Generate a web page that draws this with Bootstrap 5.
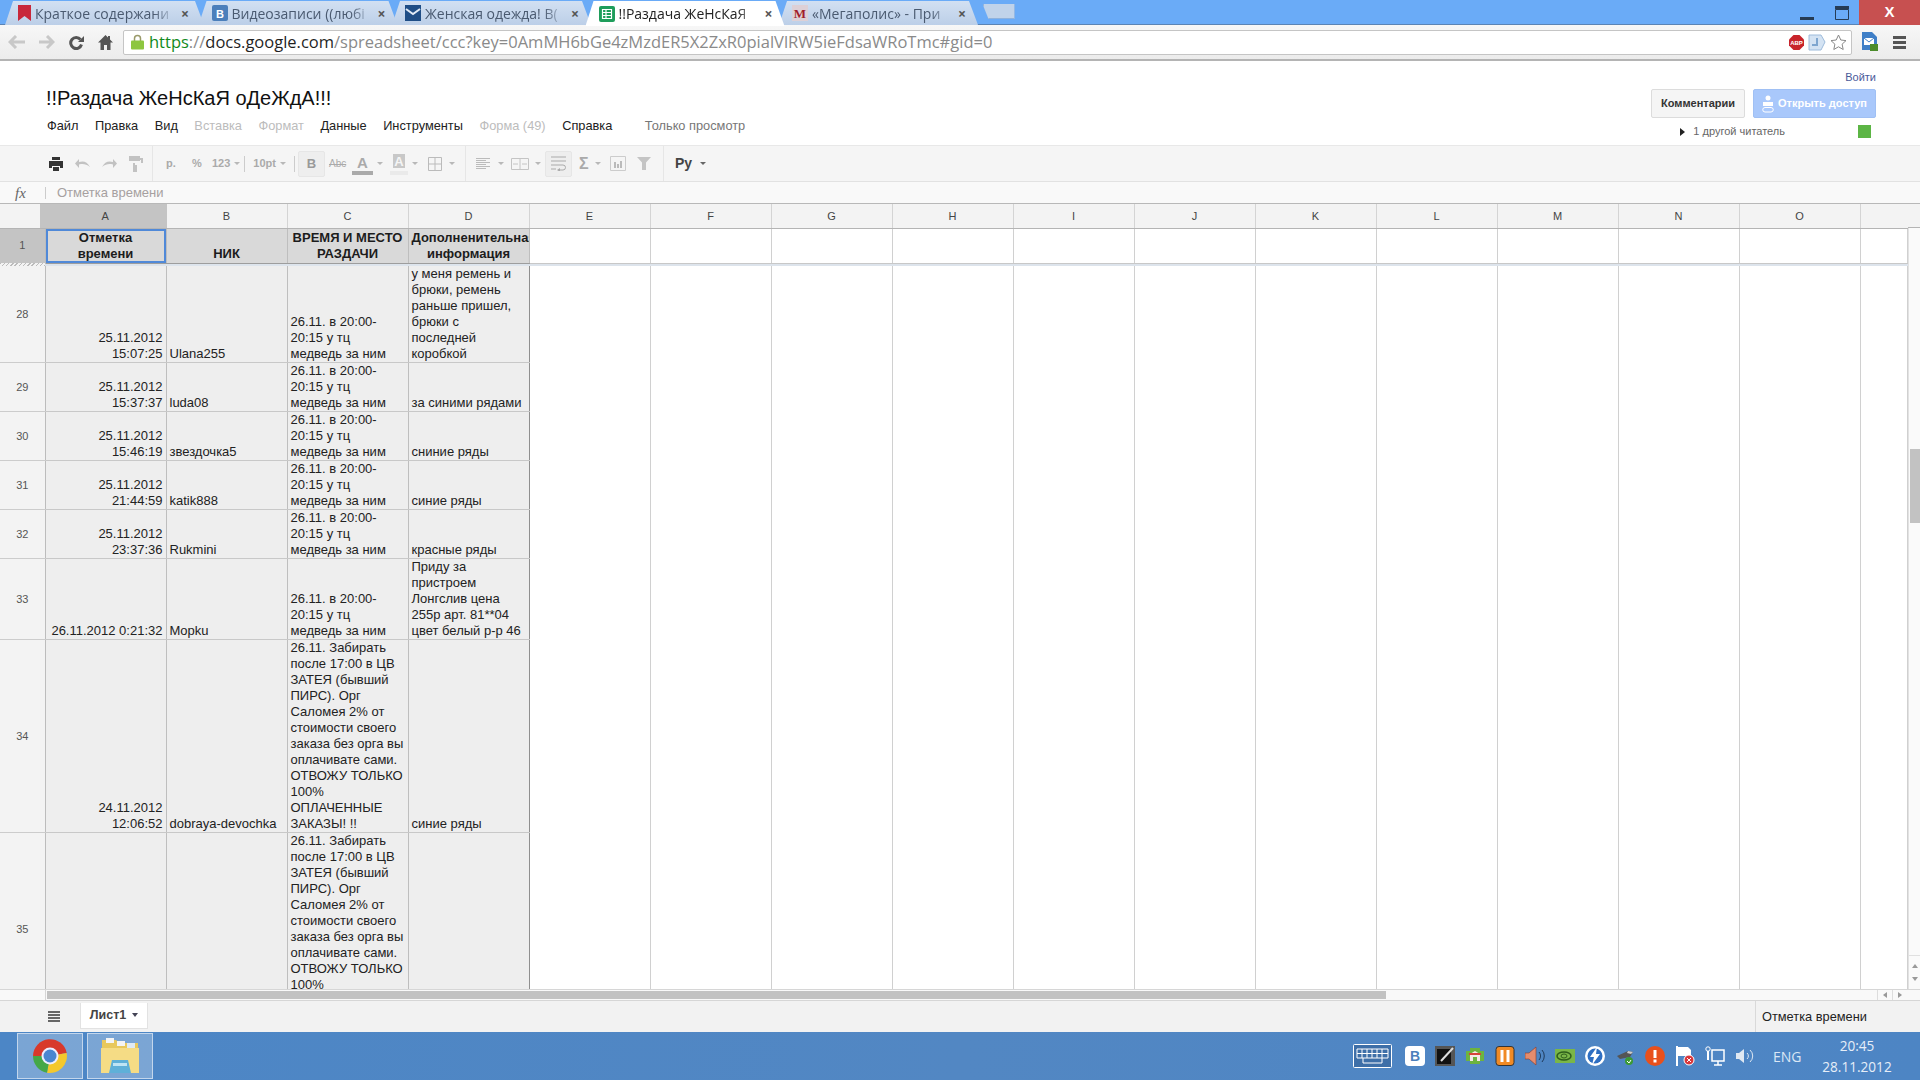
<!DOCTYPE html>
<html lang="ru">
<head>
    <meta charset="UTF-8">
    <meta name="viewport" content="width=device-width, initial-scale=1.0">
    <title>!!Раздача ЖеНсКаЯ оДеЖдА!!!</title>
    <link href="https://cdn.jsdelivr.net/npm/bootstrap@5.3.3/dist/css/bootstrap.min.css" rel="stylesheet">
    <style>
      html, body { height: 100%; overflow: hidden; }
      body { font-family: "Liberation Sans", Arial, sans-serif; font-size: 13px; color: #222; background: #fff; }
      .app { width: 1920px; height: 1080px; overflow: hidden; }

      /* tab strip */
      .tab-strip { height: 25px; background: #6aabf7; border-bottom: 1px solid #5b84b4; padding-left: 5px; flex: none; }
      .tab { width: 199px; height: 24px; margin-top: 1px; margin-right: -5.5px; padding: 0 0 0 13px; flex: none;
        font-family: "Open Sans", sans-serif; font-size: 14px; color: #4a5a70;
        background: linear-gradient(#d2e0f2, #bccfe8);
        clip-path: polygon(0 100%, 8px 0, calc(100% - 9px) 0, 100% 100%); }
      .tab.active { background: #fff; color: #222; height: 25px; z-index: 2; }
      .tab-title { width: 140px; margin-left: 4px; white-space: nowrap;
        -webkit-mask-image: linear-gradient(90deg, #000 85%, transparent); mask-image: linear-gradient(90deg, #000 85%, transparent); }
      .tab-close { margin-left: 6px; font-size: 14px; font-weight: 700; color: #555; }
      .new-tab { width: 32px; height: 15px; margin: 4px 0 0 10px; background: #c0d3ea; border: 1px solid #8fb2dc; border-top: 0;
        clip-path: polygon(0 0, 100% 0, 100% 100%, 6px 100%); }
      .win-btn { width: 35px; height: 24px; }
      .win-close { width: 61px; height: 25px; background: #c75050; color: #fff; font-weight: 700; font-size: 15px; }

      /* address bar */
      .address-row { height: 36px; background: linear-gradient(#f7f7f7, #ececec); border-bottom: 2px solid #b4b4b4; padding: 0 0 0 8px; flex: none; gap: 14px; }
      .address-box { width: 1729px; height: 25px; margin: 0 -5px 0 -4px; background: #fff; border: 1px solid #c5c5c5; border-radius: 2px;
        padding-left: 7px; font-family: "Open Sans", sans-serif; font-size: 16.5px; white-space: nowrap; line-height: 22px; }
      .lock { margin-right: 5px; flex: none; }
      .u-green { color: #128a1c; }
      .u-dim { color: #8a8a8a; }
      .u-dark { color: #1f1f1f; }

      /* doc header */
      .doc-head { height: 85px; padding: 0 44px 0 46px; border-bottom: 1px solid #e8e8e8; flex: none; }
      .doc-title { font-size: 20px; line-height: 24px; color: #111; margin-top: 25px; white-space: nowrap; }
      .doc-menu { margin: 8px 0 0 1px; gap: 16.5px; font-size: 12.8px; color: #222; line-height: 16px; }
      .doc-menu .off { color: #bcbcbc; }
      .doc-menu .note { color: #777; margin-left: 16px; }
      .signin { font-size: 11px; color: #4a5a9a; line-height: 14px; margin-top: 9px; text-align: right; }
      .gbtn { height: 29px; padding: 0 8px; font-size: 11px; font-weight: 700; line-height: 27px; border-radius: 2px; white-space: nowrap; }
      .gbtn-plain { width: 94px; background: #f5f5f5; border: 1px solid #dcdcdc; color: #333; }
      .gbtn-share { width: 123px; background: #a9c8fb; border: 1px solid #a0c0f4; color: #fff; }
      .btn-row { margin-top: 5px; }
      .viewers { font-size: 11px; color: #666; line-height: 13px; margin-top: 7px; }
      .viewer-mark { width: 13px; height: 13px; background: #5cb545; margin: 0 5px 0 73px; }

      /* sheet toolbar */
      .tools { height: 36px; background: #f5f5f5; border-bottom: 1px solid #e2e2e2; flex: none; color: #aaa; font-size: 11px; font-weight: 700; }
      .tool-group { height: 100%; border-right: 1px solid #e6e6e6; }
      .tool-text { white-space: nowrap; }
      .caret-sm { width: 0; height: 0; border: 3px solid transparent; border-top: 3px solid #b8b8b8; border-bottom: 0; }
      .tool-sep { width: 1px; height: 16px; background: #ccc; }
      .tool-on { width: 27px; height: 26px; background: #eee; border: 1px solid #e6e6e6; border-radius: 2px; }

      /* formula bar */
      .fx-bar { height: 22px; background: #f9f9f9; border-bottom: 1px solid #b8b8b8; flex: none; color: #a6a0a0; font-size: 13px; padding-top: 1px; }
      .fx-mark { width: 45px; padding-left: 15px; font-family: "Liberation Serif", serif; font-style: italic; font-size: 15px; color: #666; }
      .fx-sep { width: 1px; height: 12px; background: #ccc; margin-right: 11px; }

      /* grid */
      .grid-wrap { height: 785px; flex: none; overflow: hidden; }
      .grid-main { width: 1908px; flex: none; overflow: hidden; height: 100%; }
      .sheet { width: 1908px; table-layout: fixed; border-collapse: collapse; margin: 0; }
      .sheet > * > tr > * { padding: 0 3px; line-height: 16px; background: #fff; box-shadow: none; border: 0; border-right: 1px solid #d0d0d0; vertical-align: bottom; overflow: hidden; color: #222; }
      .sheet > thead > tr > th { height: 24px; background: #f3f3f3; font-size: 11px; font-weight: 400; color: #444; text-align: center; vertical-align: middle; border-bottom: 1px solid #b4b4b4; border-right: 1px solid #d4d4d4; }
      .sheet > thead > tr > th.corner { background: #f3f3f3 linear-gradient(#c4c4c4, #c4c4c4) no-repeat right top / 5px 100%; border-right: 0; }
      .sheet > thead > tr > th.sel { background: #c4c4c4; border-right: 1px solid #c4c4c4; }
      .sheet > thead > tr > th.last { border-right: 0; }
      .sheet > tbody > tr > th { background: #f3f3f3; font-size: 11px; font-weight: 400; color: #555; text-align: center; vertical-align: middle; border-bottom: 1px solid #ccc; border-right: 1px solid #bcbcbc; padding: 0; }
      .sheet > tbody > tr > td.fill { background: #eee; border-bottom: 1px solid #c8c8c8; border-right: 1px solid #bebebe; white-space: pre; }
      .sheet > tbody > tr > td.fill.edge { border-right: 1px solid #8f8f8f; }
      .sheet > tbody > tr > td.right { text-align: right; }
      .sheet > tbody > tr.head-row > th { background: #c4c4c4; line-height: 33px; border-bottom: 0; }
      .sheet > tbody > tr.head-row > td { height: 34px; line-height: 16.5px; padding-top: 1px; }
      .sheet > tbody > tr.head-row > td.fill { background: #d9d9d9; font-weight: 700; text-align: center; color: #1c1c1c; border-bottom: 1px solid #9d9d9d; white-space: normal; }
      .sheet > tbody > tr.head-row > td.nowrap { white-space: nowrap; text-align: left; }
      .sheet > tbody > tr.head-row > td.nowrap span { display: block; text-align: center; }
      .sheet > tbody > tr.head-row > td.selected { box-shadow: inset 0 0 0 2px #5089d8; }
      .sheet > tbody > tr.head-row > td.blank { border-bottom: 1px solid #c8c8c8; }
      .sheet > tbody > tr.band > * { height: 3px; line-height: 0; font-size: 0; padding: 0; background: #dde4ec; border: 0; }
      .sheet > tbody > tr.band > th { background: repeating-linear-gradient(135deg, #bbb 0 1px, #f3f3f3 1px 3px); border: 0; }

      /* scrollbars */
      .vscroll { width: 12px; background: #fafafa; border-left: 1px solid #e2e2e2; height: 100%; }
      .vscroll-head { height: 24px; background: #f3f3f3; border-bottom: 1px solid #b4b4b4; flex: none; margin-left: -1px; }
      .vscroll-thumb { height: 74px; margin-top: 221px; background: #c2c2c2; margin-left: 1px; flex: none; }
      .vscroll-arrows { margin-top: auto; height: 34px; border-top: 1px solid #e0e0e0; }
      .arrow-up { width: 0; height: 0; border: 3px solid transparent; border-bottom: 4px solid #999; border-top: 0; }
      .arrow-down { width: 0; height: 0; border: 3px solid transparent; border-top: 4px solid #999; border-bottom: 0; }
      .arrow-l { width: 0; height: 0; border: 3px solid transparent; border-right: 4px solid #999; border-left: 0; }
      .arrow-r { width: 0; height: 0; border: 3px solid transparent; border-left: 4px solid #999; border-right: 0; }
      .hscroll { height: 12px; background: #f9f9f9; border-top: 1px solid #d6d6d6; border-bottom: 1px solid #d6d6d6; flex: none; }
      .hscroll-side { width: 46px; border-right: 1px solid #d6d6d6; flex: none; }
      .hscroll-thumb { width: 1339px; height: 8px; background: #c2c2c2; margin: 1px 0 0 1px; flex: none; }
      .hscroll-arrows { width: 43px; }
      .hscroll-arrows > div { width: 15px; border-left: 1px solid #ddd; }

      /* sheet tabs */
      .sheet-bar { height: 31px; background: #f2f2f2; flex: none; }
      .sheet-menu { width: 80px; padding-left: 48px; }
      .sheet-tab { width: 68px; height: 26px; margin-top: -2px; background: #fff; border: 1px solid #e2e2e2; border-top: 0; font-size: 12.5px; font-weight: 700; color: #444; gap: 6px; }
      .sheet-caret { width: 0; height: 0; border: 3.5px solid transparent; border-top: 4px solid #445; border-bottom: 0; }
      .cell-status { width: 165px; height: 100%; border-left: 1px solid #d9d9d9; padding-left: 6px; font-size: 12.8px; color: #222; }

      /* taskbar */
      .taskbar { height: 48px; background: linear-gradient(90deg, #4c86c6, #5287c3 50%, #4d85c4); flex: none; padding-left: 17px; }
      .task-btn { width: 66px; height: 46px; margin-right: 4px; background: rgba(255,255,255,.26); border: 1px solid rgba(255,255,255,.55); }
      .tray { gap: 10px; margin-right: 10px; }
      .tray svg { display: block; }
      .tray-kbd { margin-right: 3px; }
      .lang { width: 28px; margin-right: 21px; font-size: 14px; color: #dbe7f5; font-family: "Open Sans", sans-serif; }
      .clock { width: 70px; margin-right: 28px; text-align: center; font-size: 13.6px; line-height: 21px; color: #e6eef8; font-family: "Open Sans", sans-serif; white-space: nowrap; }
    </style>
</head>
<body>
<div class="app d-flex flex-column">

  <!-- вкладки -->
  <div class="tab-strip d-flex">
    <div class="tab d-flex align-items-center">
      <svg width="13" height="16" viewBox="0 0 13 16"><path d="M0 0h13v16L6.5 11 0 16z" fill="#c8273a"/></svg>
      <div class="tab-title">Краткое содержани</div><span class="tab-close">×</span>
    </div>
    <div class="tab d-flex align-items-center">
      <svg width="16" height="16" viewBox="0 0 16 16"><rect width="16" height="16" rx="2" fill="#4c7fbb"/><text x="8" y="12.5" font-size="11" font-weight="700" text-anchor="middle" fill="#fff" font-family="Liberation Sans">В</text></svg>
      <div class="tab-title">Видеозаписи ((любі</div><span class="tab-close">×</span>
    </div>
    <div class="tab d-flex align-items-center">
      <svg width="16" height="16" viewBox="0 0 16 16"><rect width="16" height="16" fill="#1f4e86"/><path d="M1 4l7 5 7-5" fill="none" stroke="#dfe9f5" stroke-width="2"/></svg>
      <div class="tab-title">Женская одежда! В(</div><span class="tab-close">×</span>
    </div>
    <div class="tab active d-flex align-items-center">
      <svg width="16" height="16" viewBox="0 0 16 16"><rect width="16" height="16" rx="2" fill="#1f9d5b"/><path d="M3.500 3.500h9v9h-9zM3.500 6.500h9M3.500 9.500h9M7 3.500v9" fill="none" stroke="#fff" stroke-width="1.200"/></svg>
      <div class="tab-title">!!Раздача ЖеНсКаЯ</div><span class="tab-close">×</span>
    </div>
    <div class="tab d-flex align-items-center">
      <svg width="16" height="16" viewBox="0 0 16 16"><rect width="16" height="16" fill="#ddd0d6"/><text x="8" y="13" font-size="13" font-weight="700" text-anchor="middle" fill="#a11d2b" font-family="Liberation Serif">M</text></svg>
      <div class="tab-title">«Мегаполис» - При</div><span class="tab-close">×</span>
    </div>
    <div class="new-tab"></div>
    <div class="ms-auto d-flex">
      <div class="win-btn d-flex justify-content-center align-items-end pb-1"><svg width="14" height="3"><rect width="14" height="3" fill="#263c55"/></svg></div>
      <div class="win-btn d-flex justify-content-center align-items-center"><svg width="14" height="15" viewBox="0 0 14 15"><path d="M.5 4.500h13v10H.5z" fill="#6aabf7" stroke="#263c55"/><path d="M0 1h14v3H0z" fill="#263c55"/></svg></div>
      <div class="win-close d-flex justify-content-center align-items-center">X</div>
    </div>
  </div>

  <!-- адресная строка -->
  <div class="address-row d-flex align-items-center">
    <svg width="17" height="14" viewBox="0 0 17 14"><path d="M8 1L2 7l6 6M2 7h15" fill="none" stroke="#c8c8c8" stroke-width="3"/></svg>
    <svg width="16" height="14" viewBox="0 0 16 14"><path d="M8 1l6 6-6 6M14 7H0" fill="none" stroke="#c8c8c8" stroke-width="3"/></svg>
    <svg width="15" height="15" viewBox="0 0 15 15"><path d="M12.500 9.500a5.500 5.500 0 1 1-1-5" fill="none" stroke="#555" stroke-width="3"/><path d="M15 1v6H9z" fill="#555"/></svg>
    <svg width="15" height="15" viewBox="0 0 15 15"><path d="M7.500 0L0 7.500h2.500V15h3.500v-5h3v5h3.500V7.500H15L12 4.500V1h-2v1.500z" fill="#555"/></svg>
    <div class="address-box d-flex align-items-center">
      <svg width="13" height="16" viewBox="0 0 13 16" class="lock"><path d="M3.500 7V4.500a3 3 0 0 1 6 0V7" fill="none" stroke="#9a9a6a" stroke-width="1.500"/><rect y="6.500" width="13" height="9" rx="1" fill="#8dc63f"/></svg>
      <span><span class="u-green">https</span><span class="u-dim">://</span><span class="u-dark">docs.google.com</span><span class="u-dim">/spreadsheet/ccc?key=0AmMH6bGe4zMzdER5X2ZxR0pialVlRW5ieFdsaWRoTmc#gid=0</span></span>
      <div class="ms-auto d-flex align-items-center gap-1 pe-1">
        <svg width="15" height="15" viewBox="0 0 15 15"><path d="M4.500 0h6L15 4.500v6L10.500 15h-6L0 10.500v-6z" fill="#c8242b"/><text x="7.500" y="10" font-size="6" font-weight="700" text-anchor="middle" fill="#fff" font-family="Liberation Sans">ABP</text></svg>
        <svg width="18" height="17" viewBox="0 0 18 17"><path d="M1 1h12l4 7-4 8H1z" fill="#d4e3f3" stroke="#9ebcdc"/><path d="M9 4v7H4" fill="none" stroke="#7fa6cf" stroke-width="2"/></svg>
        <svg width="17" height="17" viewBox="0 0 17 17"><path d="M8.500 1l2.300 5 5.200.6-3.900 3.600 1.100 5.300-4.700-2.700-4.700 2.700 1.100-5.300L1 6.600 6.200 6z" fill="#fff" stroke="#888"/></svg>
      </div>
    </div>
    <svg width="18" height="20" viewBox="0 0 18 20"><path d="M1 0h10l5 5v13H1z" fill="#3f7fc7"/><path d="M3 6h10v7H3z" fill="#fff"/><path d="M3 6l5 4 5-4" fill="none" stroke="#3f7fc7"/><rect x="9" y="12" width="8" height="7" fill="#4c8c2b"/></svg>
    <svg width="13" height="13" viewBox="0 0 13 13"><path d="M0 0h13v3H0zM0 5h13v3H0zM0 10h13v3H0z" fill="#555"/></svg>
  </div>

  <!-- шапка документа -->
  <div class="doc-head d-flex justify-content-between">
    <div>
      <div class="doc-title">!!Раздача ЖеНсКаЯ оДеЖдА!!!</div>
      <div class="doc-menu d-flex">
        <span>Файл</span><span>Правка</span><span>Вид</span><span class="off">Вставка</span><span class="off">Формат</span><span>Данные</span><span>Инструменты</span><span class="off">Форма (49)</span><span>Справка</span><span class="note">Только просмотр</span>
      </div>
    </div>
    <div>
      <div class="signin">Войти</div>
      <div class="d-flex gap-2 btn-row ps-1">
        <div class="gbtn gbtn-plain text-center">Комментарии</div>
        <div class="gbtn gbtn-share d-flex align-items-center justify-content-center gap-1">
          <svg width="12" height="18" viewBox="0 0 12 18"><circle cx="6" cy="3" r="2.500" fill="#fff"/><path d="M1 7h10v4H1z" fill="#fff"/><path d="M3 12.500h6a2 2 0 0 1 0 4.500H3a2 2 0 0 1 0-4.500z" fill="none" stroke="#fff"/></svg>
          <span>Открыть доступ</span>
        </div>
      </div>
      <div class="viewers d-flex align-items-center justify-content-end">
        <svg width="5" height="8" viewBox="0 0 5 8" class="me-2"><path d="M0 0l5 4-5 4z" fill="#222"/></svg>
        <span>1 другой читатель</span>
        <div class="viewer-mark"></div>
      </div>
    </div>
  </div>

  <!-- панель инструментов таблицы -->
  <div class="tools d-flex">
    <div class="tool-group d-flex align-items-center gap-2" style="padding: 0 9px 0 49px">
      <svg width="14" height="14" viewBox="0 0 14 14" class="me-1"><path d="M3 0h8v3H3zM0 4h14v7h-3V9H3v2H0zM4 10h6v4H4z" fill="#333"/></svg>
      <svg width="15" height="9" viewBox="0 0 15 9" class="me-1"><path d="M4 0v3c5-1.500 8 0 11 5-4-3-7-3.500-11-2.500V9L0 4.500z" fill="#c2c2c2"/></svg>
      <svg width="15" height="9" viewBox="0 0 15 9" class="me-1"><path d="M11 0v3C6 1.500 3 3 0 8c4-3 7-3.500 11-2.500V9l4-4.500z" fill="#c2c2c2"/></svg>
      <svg width="14" height="16" viewBox="0 0 14 16"><path d="M0 0h11v5H0zM11 2h3v5H6v2h2v7H4V7h8V4h-1z" fill="#c2c2c2"/></svg>
    </div>
    <div class="tool-group d-flex align-items-center" style="padding-left: 13px; width: 313px">
      <span class="tool-text" style="width: 26px">р.</span>
      <span class="tool-text" style="width: 20px">%</span>
      <span class="tool-text me-1">123</span><span class="caret-sm me-1"></span>
      <span class="tool-sep me-2"></span>
      <span class="tool-text me-1">10pt</span><span class="caret-sm" style="margin-right: 8px"></span>
      <span class="tool-sep" style="margin-right: 3px"></span>
      <span class="tool-on d-flex justify-content-center align-items-center" style="margin-right: 4px; color: #999; font-size: 13px">B</span>
      <span class="tool-text" style="width: 23px; font-size: 10px; font-weight: 400; text-decoration: line-through">Abc</span>
      <svg width="21" height="22" viewBox="0 0 21 22" class="me-1"><text x="10.500" y="15" font-size="15" text-anchor="middle" fill="#aaa" font-family="Liberation Sans">A</text><rect y="18" width="21" height="4" fill="#aaa"/></svg>
      <span class="caret-sm" style="margin-right: 7px"></span>
      <svg width="18" height="22" viewBox="0 0 18 22" class="me-1"><rect x="3" y="1" width="12" height="14" fill="#c8c8c8"/><text x="9" y="13" font-size="13" font-weight="700" text-anchor="middle" fill="#f5f5f5" font-family="Liberation Sans">A</text><rect y="18" width="18" height="4" fill="#eaeaea"/></svg>
      <span class="caret-sm" style="margin-right: 10px"></span>
      <svg width="14" height="14" viewBox="0 0 14 14" style="margin-right: 7px"><path d="M.5.5h13v13H.5zM7 .5v13M.5 7h13" fill="none" stroke="#bbb"/></svg>
      <span class="caret-sm"></span>
    </div>
    <div class="tool-group d-flex align-items-center" style="padding-left: 10px; width: 198px">
      <svg width="14" height="12" viewBox="0 0 14 12" style="margin-right: 8px"><path d="M0 .5h14M0 2.500h10M0 4.500h14M0 6.500h10M0 8.500h14M0 10.500h10" stroke="#bbb"/></svg>
      <span class="caret-sm" style="margin-right: 7px"></span>
      <svg width="18" height="12" viewBox="0 0 18 12" style="margin-right: 6px"><path d="M.5.5h17v11H.5zM9 .5v11M2 6h5M16 6h-5" fill="none" stroke="#c4c4c4"/></svg>
      <span class="caret-sm" style="margin-right: 4px"></span>
      <span class="tool-on d-flex justify-content-center align-items-center" style="margin-right: 7px">
        <svg width="15" height="15" viewBox="0 0 15 15"><path d="M0 1h15M0 5h15M0 9h12a2.500 2.500 0 0 1 0 5H8M0 13h5" fill="none" stroke="#aaa"/><path d="M9 12v4l-3-2z" fill="#aaa"/></svg>
      </span>
      <span class="tool-text" style="font-size: 16px; width: 16px">Σ</span>
      <span class="caret-sm" style="margin-right: 8px"></span>
      <svg width="18" height="17" viewBox="0 0 18 17" style="margin-right: 10px"><path d="M1.500 1.500h15v14h-15z" fill="none" stroke="#ccc"/><path d="M5 7h2v6H5zM8 9h2v4H8zM11 6h2v7h-2z" fill="#bbb"/></svg>
      <svg width="14" height="13" viewBox="0 0 14 13"><path d="M0 0h14L9 5.500V13H5V5.500z" fill="#c4c4c4"/></svg>
    </div>
    <div class="d-flex align-items-center" style="padding-left: 11px; color: #444">
      <span class="tool-text me-2" style="font-size: 14px">Ру</span><span class="caret-sm" style="border-top-color: #666"></span>
    </div>
  </div>

  <!-- строка формул -->
  <div class="fx-bar d-flex align-items-center">
    <div class="fx-mark">fx</div><div class="fx-sep"></div><span>Отметка времени</span>
  </div>

  <!-- таблица -->
  <div class="grid-wrap d-flex">
    <div class="grid-main">
      <table class="table sheet" id="sheet"><colgroup id="cols"></colgroup><thead></thead><tbody></tbody></table>
    </div>
    <div class="vscroll d-flex flex-column">
      <div class="vscroll-head"></div>
      <div class="vscroll-thumb"></div>
      <div class="vscroll-arrows d-flex flex-column align-items-center justify-content-around py-1"><div class="arrow-up"></div><div class="arrow-down"></div></div>
    </div>
  </div>
  <div class="hscroll d-flex">
    <div class="hscroll-side"></div>
    <div class="hscroll-thumb"></div>
    <div class="hscroll-arrows ms-auto d-flex">
      <div class="d-flex align-items-center justify-content-center"><div class="arrow-l"></div></div>
      <div class="d-flex align-items-center justify-content-center"><div class="arrow-r"></div></div>
    </div>
  </div>

  <!-- листы -->
  <div class="sheet-bar d-flex align-items-center">
    <div class="sheet-menu"><svg width="12" height="11" viewBox="0 0 12 11" class="d-block"><path d="M0 0h12v2H0zM0 3h12v2H0zM0 6h12v2H0zM0 9h12v2H0z" fill="#666"/></svg></div>
    <div class="sheet-tab d-flex align-items-center justify-content-center">Лист1<span class="sheet-caret"></span></div>
    <div class="cell-status ms-auto d-flex align-items-center">Отметка времени</div>
  </div>

  <!-- панель задач -->
  <div class="taskbar d-flex align-items-center">
    <div class="task-btn d-flex justify-content-center align-items-center">
      <svg width="36" height="36" viewBox="0 0 36 36"><path d="M18 18L1 18A17 17 0 0 1 34.700 15Z" fill="#d8392b"/><path d="M18 18L34.700 15A17 17 0 0 1 15 34.700Z" fill="#f4c82d"/><path d="M18 18L15 34.700A17 17 0 0 1 1 18Z" fill="#45a848"/><circle cx="18" cy="18" r="8.500" fill="#eef"/><circle cx="18" cy="18" r="6.500" fill="#4a86d0"/></svg>
    </div>
    <div class="task-btn d-flex justify-content-center align-items-center">
      <svg width="40" height="38" viewBox="0 0 40 38"><path d="M2 3h14l3 3h19v10H2z" fill="#e8c85c"/><rect x="6" y="1" width="8" height="5" fill="#f4f4f4"/><rect x="17" y="4" width="8" height="5" fill="#f4f4f4"/><rect x="27" y="6" width="8" height="5" fill="#dfeaf5"/><path d="M1 11h38v25H1z" fill="#f5dc85"/><path d="M9 36l3-13h16l3 13z" fill="#5fb0d8"/><path d="M13 26h14v3H13z" fill="#bfe4f4"/></svg>
    </div>
    <div class="ms-auto d-flex align-items-center tray">
      <svg class="tray-kbd" width="39" height="24" viewBox="0 0 39 24"><rect x=".5" y=".5" width="38" height="23" rx="1" fill="#3e6fa8" stroke="#fff"/><path d="M4 5h31v9H4zM4 9.500h31M9 5v9M14 5v9M19 5v9M24 5v9M29 5v9M10 14v5h19v-5" fill="none" stroke="#fff"/></svg>
      <svg width="20" height="20" viewBox="0 0 20 20"><rect width="20" height="20" rx="4" fill="#fff"/><text x="10" y="15" font-size="14" font-weight="700" text-anchor="middle" fill="#4c7fbb" font-family="Liberation Sans">В</text></svg>
      <svg width="20" height="20" viewBox="0 0 20 20"><rect width="20" height="20" fill="#555"/><rect x="2" y="3" width="14" height="15" fill="#111"/><path d="M6 15L18 2" stroke="#ddd" stroke-width="2"/></svg>
      <svg width="20" height="20" viewBox="0 0 20 20"><path d="M5 2h10v3h4v10h-4v3H5v-3H1V5h4z" fill="#6db33f"/><path d="M5 8l5-3 5 3v7H12v-4H8v4H5z" fill="#f4e9e9"/><path d="M4 8h12" stroke="#d6443a" stroke-width="2"/></svg>
      <svg width="20" height="20" viewBox="0 0 20 20"><rect x="1" y=".5" width="18" height="19" rx="3" fill="#f08a24" stroke="#333"/><rect x="5.500" y="4" width="3" height="12" fill="#fff"/><rect x="11.500" y="4" width="3" height="12" fill="#fff"/></svg>
      <svg width="20" height="20" viewBox="0 0 20 20"><path d="M0 7h4l7-6v18l-7-6H0z" fill="#e58c6d" stroke="#8a3a2a" stroke-width=".6"/><path d="M14 6a6 6 0 0 1 0 8M17 4a9 9 0 0 1 0 12" fill="none" stroke="#1f3a5a"/></svg>
      <svg width="20" height="20" viewBox="0 0 20 20"><rect y="3" width="20" height="14" fill="#7ab648"/><ellipse cx="9" cy="10" rx="7" ry="4" fill="none" stroke="#2e5e1c" stroke-width="1.500"/><ellipse cx="9" cy="10" rx="3" ry="2" fill="none" stroke="#2e5e1c"/></svg>
      <svg width="20" height="20" viewBox="0 0 20 20"><circle cx="10" cy="10" r="10" fill="#fff"/><circle cx="10" cy="10" r="7.500" fill="#2f6fc2"/><path d="M12 1L5 11h4l-2 8 8-11h-4z" fill="#fff"/></svg>
      <svg width="20" height="20" viewBox="0 0 20 20"><path d="M2 10l11-5 5 1-3 5-10 2z" fill="#555"/><path d="M13 5l5 1-2 2-4-1z" fill="#ccc"/><circle cx="14" cy="15" r="4" fill="#3c9a34"/><path d="M12 15l2 2 2-3" fill="none" stroke="#fff"/></svg>
      <svg width="20" height="20" viewBox="0 0 20 20"><circle cx="10" cy="10" r="10" fill="#e8501c"/><rect x="8.500" y="4" width="3" height="8" fill="#fff"/><rect x="8.500" y="13.500" width="3" height="3" fill="#fff"/></svg>
      <svg width="20" height="20" viewBox="0 0 20 20"><path d="M2 0v20" stroke="#fff" stroke-width="2"/><path d="M3 1h10l3 3v6H3z" fill="#fff"/><circle cx="14" cy="14" r="5" fill="#d9363a" stroke="#fff"/><path d="M12 12l4 4M16 12l-4 4" stroke="#fff"/></svg>
      <svg width="20" height="20" viewBox="0 0 20 20"><path d="M7 4h12v11H7zM13 15v4M9 19h8" fill="none" stroke="#fff" stroke-width="1.500"/><circle cx="3" cy="3" r="2.200" fill="none" stroke="#fff"/><path d="M3 5v9" stroke="#fff" stroke-width="2"/></svg>
      <svg width="20" height="20" viewBox="0 0 20 20"><path d="M1 7h3l5-4v14l-5-4H1z" fill="#dfe8f2"/><path d="M12 7a4 4 0 0 1 0 6M15 4a8 8 0 0 1 0 12" fill="none" stroke="#dfe8f2"/></svg>
    </div>
    <div class="lang text-center ms-2">ENG</div>
    <div class="clock"><div>20:45</div><div>28.11.2012</div></div>
  </div>
</div>

<script src="https://cdn.jsdelivr.net/npm/bootstrap@5.3.3/dist/js/bootstrap.bundle.min.js"></script>
<script>
    // ДАННЫЕ ТАБЛИЦЫ
    const columns = 'ABCDEFGHIJKLMNO'.split('');
    const place = '26.11. в 20:00-\n20:15 у тц\nмедведь за ним';
    const zateya = '26.11. Забирать\nпосле 17:00 в ЦВ\nЗАТЕЯ (бывший\nПИРС). Орг\nСаломея 2% от\nстоимости своего\nзаказа без орга вы\nоплачивате сами.\nОТВОЖУ ТОЛЬКО\n100%\nОПЛАЧЕННЫЕ\nЗАКАЗЫ! !!';
    const rows = [
      [28, '25.11.2012\n15:07:25', 'Ulana255', place, 'у меня ремень и\nбрюки, ремень\nраньше пришел,\nбрюки с\nпоследней\nкоробкой'],
      [29, '25.11.2012\n15:37:37', 'luda08', place, 'за синими рядами'],
      [30, '25.11.2012\n15:46:19', 'звездочка5', place, 'сниние ряды'],
      [31, '25.11.2012\n21:44:59', 'katik888', place, 'синие ряды'],
      [32, '25.11.2012\n23:37:36', 'Rukmini', place, 'красные ряды'],
      [33, '26.11.2012 0:21:32', 'Mopku', place, 'Приду за\nпристроем\nЛонгслив цена\n255р арт. 81**04\nцвет белый р-р 46'],
      [34, '24.11.2012\n12:06:52', 'dobraya-devochka', zateya, 'синие ряды'],
      [35, '', '', zateya, '']
    ];

    // пустые ячейки E..O + хвост
    const blanks = '<td></td>'.repeat(12);

    // ширины колонок
    document.getElementById('cols').innerHTML = '<col style="width:45px">' +
      columns.map(() => '<col style="width:121px">').join('') + '<col>';

    // шапка колонок
    document.querySelector('#sheet thead').innerHTML = '<tr><th class="corner"></th>' +
      columns.map(c => `<th class="${c === 'A' ? 'sel' : ''}">${c}</th>`).join('') + '<th class="last"></th></tr>';

    // строки
    let html = '<tr class="head-row"><th>1</th>' +
      '<td class="fill selected">Отметка<br>времени</td>' +
      '<td class="fill">НИК</td>' +
      '<td class="fill">ВРЕМЯ И МЕСТО РАЗДАЧИ</td>' +
      '<td class="fill nowrap">Дополненительная<span>информация</span></td>' +
      '<td class="blank"></td>'.repeat(12) + '</tr>' +
      '<tr class="band"><th></th><td colspan="16"></td></tr>';
    rows.forEach(r => {
      html += `<tr><th>${r[0]}</th>` +
        `<td class="fill right">${r[1]}</td><td class="fill">${r[2]}</td><td class="fill">${r[3]}</td><td class="fill edge">${r[4]}</td>` +
        blanks + '</tr>';
    });
    document.querySelector('#sheet tbody').innerHTML = html;
</script>
</body>
</html>
